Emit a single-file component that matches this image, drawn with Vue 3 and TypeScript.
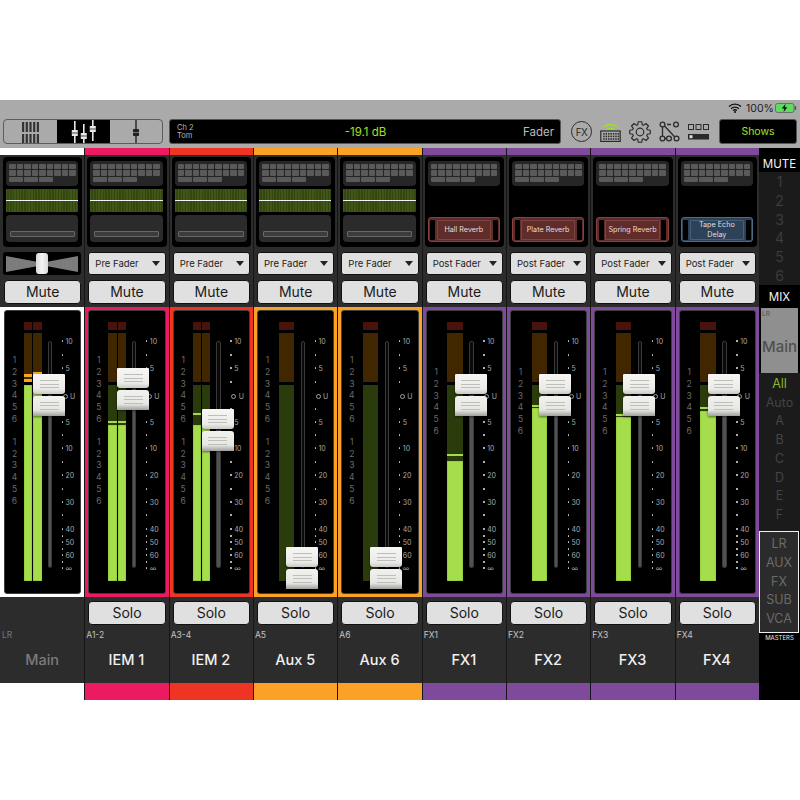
<script setup lang="ts">
type Channel = {
  tag: string
  name: string
  color: string
  fader: number
  send?: string
  fx?: string
  fxTone?: 'red' | 'blue'
  mono?: boolean
  fill: number[]
  peak: number[]
}

// fader / fill / peak values are px from the top of the meter panel
const channels: Channel[] = [
  { tag: 'LR', name: 'Main', color: '#ffffff', fader: 63, fill: [74, 74], peak: [63, 61] },
  { tag: 'A1-2', name: 'IEM 1', color: '#ec1a60', fader: 57, send: 'Pre Fader', fill: [114, 114], peak: [110, 110] },
  { tag: 'A3-4', name: 'IEM 2', color: '#ee3524', fader: 98, send: 'Pre Fader', fill: [114, 114], peak: [102, 102] },
  { tag: 'A5', name: 'Aux 5', color: '#faa228', fader: 236, send: 'Pre Fader', mono: true, fill: [270], peak: [] },
  { tag: 'A6', name: 'Aux 6', color: '#faa228', fader: 236, send: 'Pre Fader', mono: true, fill: [270], peak: [] },
  { tag: 'FX1', name: 'FX1', color: '#804a9c', fader: 63, send: 'Post Fader', fx: 'Hall Reverb', fxTone: 'red', mono: true, fill: [150], peak: [143] },
  { tag: 'FX2', name: 'FX2', color: '#804a9c', fader: 63, send: 'Post Fader', fx: 'Plate Reverb', fxTone: 'red', mono: true, fill: [97], peak: [94] },
  { tag: 'FX3', name: 'FX3', color: '#804a9c', fader: 63, send: 'Post Fader', fx: 'Spring Reverb', fxTone: 'red', mono: true, fill: [106], peak: [103] },
  { tag: 'FX4', name: 'FX4', color: '#804a9c', fader: 63, send: 'Post Fader', fx: 'Tape Echo Delay', fxTone: 'blue', mono: true, fill: [100], peak: [96] },
]

const scale = [
  { y: 30, label: '10' }, { y: 44 }, { y: 57, label: '5' }, { y: 71 },
  { y: 85, label: 'U' }, { y: 98 }, { y: 111, label: '5' }, { y: 124 },
  { y: 137, label: '10' }, { y: 151 }, { y: 164, label: '20' }, { y: 178 },
  { y: 191, label: '30' }, { y: 204 }, { y: 218, label: '40' }, { y: 225 },
  { y: 231, label: '50' }, { y: 238 }, { y: 244, label: '60' }, { y: 251 },
  { y: 257, label: '∞' },
]

const muteGroups = ['1', '2', '3', '4', '5', '6']
const mixGroups = ['Auto', 'A', 'B', 'C', 'D', 'E', 'F']
const masters = ['LR', 'AUX', 'FX', 'SUB', 'VCA']

// meter panel top sits at y=311, green zone starts 74px below it
const greenTop = 74
const greenHeight = 196

const gearPath = (() => {
  const teeth = 8
  let d = ''
  for (let i = 0; i < teeth; i++) {
    const a = (i * Math.PI * 2) / teeth
    const pts = [
      [7.6, a - 0.3],
      [10.4, a - 0.17],
      [10.4, a + 0.17],
      [7.6, a + 0.3],
    ]
    for (const [r, t] of pts) {
      d += `${d ? 'L' : 'M'}${(11 + r * Math.sin(t)).toFixed(2)} ${(11 - r * Math.cos(t)).toFixed(2)}`
    }
  }
  return d + 'Z'
})()
</script>

<template>
  <div class="page">
    <header class="header">
      <div class="status">
        <svg class="wifi" width="14" height="10" viewBox="0 0 14 10">
          <path d="M1 3.6a8.6 8.6 0 0 1 12 0M3.1 5.7a5.6 5.6 0 0 1 7.8 0M5.1 7.6a2.8 2.8 0 0 1 3.8 0" fill="none" stroke="#111" stroke-width="1.4" />
          <circle cx="7" cy="9" r="1" fill="#111" />
        </svg>
        <span class="battery-text">100%</span>
        <svg width="22" height="10" viewBox="0 0 22 10">
          <rect x="0.5" y="0.5" width="18.5" height="9" rx="2" fill="#5fdc5f" stroke="#555" stroke-width="0.7" />
          <rect x="19.6" y="3" width="1.6" height="4" rx="0.7" fill="#555" />
          <path d="M10.6 0.8 6.8 5.6h2.5l-.8 3.6 3.9-4.9H9.9z" fill="#111" />
        </svg>
      </div>
      <div class="toolbar">
        <div class="tabs">
          <div class="tab">
            <svg width="18" height="24" viewBox="0 0 18 24">
              <g fill="#333">
                <template v-for="i in 5" :key="i">
                  <rect :x="(i - 1) * 3.7" y="1" width="2.2" height="10" />
                  <rect :x="(i - 1) * 3.7" y="13" width="2.2" height="10" />
                </template>
              </g>
            </svg>
          </div>
          <div class="tab active">
            <svg width="26" height="25" viewBox="0 0 26 25">
              <g fill="#e8e8e8">
                <rect x="3" y="1" width="1.6" height="22" />
                <rect x="12" y="4" width="1.6" height="21" />
                <rect x="21" y="0" width="1.6" height="21" />
                <rect x="0.8" y="10" width="6" height="6" rx="0.6" />
                <rect x="9.8" y="13" width="6" height="6" rx="0.6" />
                <rect x="18.8" y="6" width="6" height="6" rx="0.6" />
              </g>
              <g fill="#222">
                <rect x="0.8" y="12.6" width="6" height="0.8" />
                <rect x="9.8" y="15.6" width="6" height="0.8" />
                <rect x="18.8" y="8.6" width="6" height="0.8" />
              </g>
            </svg>
          </div>
          <div class="tab">
            <svg width="8" height="25" viewBox="0 0 8 25">
              <rect x="3.2" y="0" width="1.6" height="25" fill="#333" />
              <rect x="1" y="9" width="6" height="7" rx="0.8" fill="#222" />
              <rect x="1" y="12.2" width="6" height="0.7" fill="#999" />
            </svg>
          </div>
        </div>
        <div class="display">
          <div class="display-ch">
            <span>Ch 2</span>
            <span>Tom</span>
          </div>
          <div class="display-db">-19.1 dB</div>
          <div class="display-mode">Fader</div>
        </div>
        <div class="tools">
          <div class="fx-icon">FX</div>
          <svg width="21" height="22" viewBox="0 0 21 22">
            <path d="M4 6.2a9 9 0 0 1 13 0M6.8 8.6a5.4 5.4 0 0 1 7.4 0" fill="none" stroke="#9fe01f" stroke-width="1.5" />
            <rect x="0.8" y="10" width="19.4" height="10.4" fill="none" stroke="#2b2b2b" stroke-width="1.2" />
            <g fill="#2b2b2b">
              <template v-for="i in 7" :key="i">
                <rect :x="0.8 + i * 2.4" y="12" width="1.5" height="1.6" />
                <rect :x="0.8 + i * 2.4" y="14.6" width="1.5" height="1.6" />
                <rect :x="0.8 + i * 2.4" y="17.2" width="1.5" height="1.6" />
              </template>
            </g>
          </svg>
          <svg width="22" height="22" viewBox="0 0 22 22">
            <path :d="gearPath" fill="none" stroke="#2b2b2b" stroke-width="1.2" stroke-linejoin="round" />
            <circle cx="11" cy="11" r="3.8" fill="none" stroke="#2b2b2b" stroke-width="1.2" />
          </svg>
          <svg width="21" height="21" viewBox="0 0 21 21">
            <g fill="none" stroke="#2b2b2b" stroke-width="1.3">
              <path d="M3.5 6v9M8 3.5h4M5.5 5 15.6 15.7M6 17.5h1.6" />
              <circle cx="3.5" cy="3.5" r="2.4" />
              <circle cx="17" cy="3.5" r="2.4" />
              <circle cx="3.5" cy="17.5" r="2.4" />
              <circle cx="10" cy="17.5" r="2.4" />
              <circle cx="17.5" cy="17.5" r="2.4" />
            </g>
          </svg>
          <svg width="21" height="16" viewBox="0 0 21 16">
            <g fill="none" stroke="#2b2b2b" stroke-width="1">
              <rect x="0.5" y="0.5" width="5" height="5" />
              <rect x="8" y="0.5" width="5" height="5" />
              <rect x="15.5" y="0.5" width="5" height="5" />
            </g>
            <rect x="0" y="10" width="21" height="5.5" fill="#2b2b2b" />
            <rect x="1.5" y="11.2" width="3" height="3" fill="#ddd" />
          </svg>
        </div>
        <div class="shows">Shows</div>
      </div>
    </header>

    <main class="console">
      <div class="strips">
        <section v-for="(ch, idx) in channels" :key="ch.tag" class="strip" :class="{ master: idx === 0 }">
          <div class="color-top" :style="{ background: ch.color }"></div>
          <div class="processing">
            <div class="keys">
              <i v-for="k in 18" :key="k"></i>
              <i v-for="k in 3" :key="'w' + k" class="wide"></i>
            </div>
            <template v-if="!ch.fx">
              <div class="eq"><span></span></div>
              <div class="gate"><span></span></div>
            </template>
            <div v-else class="fx-slot" :class="ch.fxTone">
              <i></i>
              <div class="fx-name">{{ ch.fx }}</div>
              <i></i>
            </div>
          </div>

          <div v-if="ch.send" class="send">
            <span>{{ ch.send }}</span>
            <em></em>
          </div>
          <div v-else class="pan">
            <svg width="72" height="16" viewBox="0 0 72 16">
              <path d="M0 0 36 6.8 72 0V16L36 9.2 0 16Z" fill="#7c7c7c" />
            </svg>
            <div class="pan-knob"></div>
          </div>
          <button class="mute">Mute</button>

          <div class="meter-wrap" :style="{ background: ch.color }">
            <div class="meter">
              <div class="groups" :class="{ single: ch.fx }">
                <div class="group">
                  <span v-for="g in muteGroups" :key="g">{{ g }}</span>
                </div>
                <div v-if="!ch.fx" class="group">
                  <span v-for="g in muteGroups" :key="g">{{ g }}</span>
                </div>
              </div>
              <div class="bars" :class="{ mono: ch.mono }">
                <div v-for="(f, b) in ch.fill" :key="b" class="bar">
                  <div class="clip"></div>
                  <div class="hot">
                    <i
                      v-if="ch.peak[b] !== undefined && ch.peak[b] < greenTop"
                      class="peak orange"
                      :style="{ top: ch.peak[b] - 22 + 'px' }"
                    ></i>
                    <i
                      v-if="ch.peak[b] !== undefined && ch.peak[b] < greenTop"
                      class="peak orange"
                      :style="{ top: ch.peak[b] - 17 + 'px' }"
                    ></i>
                  </div>
                  <div class="safe">
                    <i class="fill" :style="{ height: greenTop + greenHeight - f + 'px' }"></i>
                    <i
                      v-if="ch.peak[b] !== undefined && ch.peak[b] >= greenTop"
                      class="peak"
                      :style="{ top: ch.peak[b] - greenTop + 'px' }"
                    ></i>
                  </div>
                </div>
              </div>
              <div class="track">
                <i :style="{ top: ch.fader + 20 - 30 + 'px' }"></i>
              </div>
              <div class="scale">
                <div v-for="(s, i) in scale" :key="i" class="tick" :style="{ top: s.y + 'px' }">
                  <template v-if="s.label === 'U'">
                    <b class="ring"></b><span>U</span>
                  </template>
                  <template v-else>
                    <b></b><span v-if="s.label">{{ s.label }}</span>
                  </template>
                </div>
              </div>
              <div class="handle" :style="{ top: ch.fader + 'px' }">
                <div class="cap"><s></s><s></s><s></s></div>
                <div class="cap lower"><s></s><s></s><s></s></div>
              </div>
            </div>
          </div>

          <div class="footer">
            <button v-if="idx > 0" class="solo">Solo</button>
            <div v-else class="solo-gap"></div>
            <div class="tag">{{ ch.tag }}</div>
            <div class="name">{{ ch.name }}</div>
          </div>
          <div class="color-bottom" :style="{ background: ch.color }"></div>
        </section>
      </div>

      <aside class="side">
        <div class="side-title first">MUTE</div>
        <div class="mute-groups">
          <span v-for="g in muteGroups" :key="g">{{ g }}</span>
        </div>
        <div class="side-title">MIX</div>
        <div class="mix-main">
          <small>LR</small>
          <span>Main</span>
        </div>
        <div class="mix-list">
          <span class="all">All</span>
          <span v-for="g in mixGroups" :key="g">{{ g }}</span>
        </div>
        <div class="masters">
          <span v-for="m in masters" :key="m">{{ m }}</span>
        </div>
        <div class="masters-label">MASTERS</div>
      </aside>
    </main>
  </div>
</template>

<style scoped>
.page {
  width: 800px;
  height: 800px;
  padding-top: 100px;
  box-sizing: border-box;
  font-family: Inter, 'Liberation Sans', sans-serif;
  overflow: hidden;
}

.header {
  height: 48px;
  background: #aaaaaa;
  display: flex;
  flex-direction: column;
  box-sizing: border-box;
  padding: 3px 3px 0;
}
.status {
  height: 16px;
  display: flex;
  align-items: flex-start;
  justify-content: flex-end;
  gap: 3px;
  font-size: 10.5px;
  line-height: 11px;
  color: #222;
}
.wifi {
  margin-right: 1px;
}
.battery-text {
  width: 26px;
}
.toolbar {
  height: 25px;
  display: flex;
  align-items: stretch;
}
.tabs {
  width: 160px;
  display: grid;
  grid-template-columns: 53px 53px 1fr;
  border: 1px solid #5c5c5c;
  border-radius: 4px;
  box-sizing: border-box;
  overflow: hidden;
}
.tab {
  display: flex;
  align-items: center;
  justify-content: center;
}
.tab.active {
  background: #000;
}
.display {
  margin-left: 6px;
  width: 392px;
  background: #000;
  border: 1px solid #555;
  border-radius: 3px;
  box-sizing: border-box;
  display: grid;
  grid-template-columns: 1fr 1fr 1fr;
  align-items: center;
  padding: 0 6px 0 7px;
}
.display-ch {
  display: flex;
  flex-direction: column;
  font-size: 7.5px;
  line-height: 8px;
  color: #b5b5b5;
}
.display-db {
  text-align: center;
  color: #a4e020;
  font-size: 11.5px;
}
.display-mode {
  text-align: right;
  color: #bbb;
  font-size: 11.5px;
}
.tools {
  width: 158px;
  display: flex;
  align-items: center;
  gap: 8px;
  padding-left: 10px;
  box-sizing: border-box;
}
.fx-icon {
  width: 21px;
  height: 21px;
  flex: none;
  box-sizing: border-box;
  border: 1.2px solid #2b2b2b;
  border-radius: 50%;
  display: flex;
  align-items: center;
  justify-content: center;
  font-size: 10px;
  letter-spacing: -0.5px;
  color: #2b2b2b;
}
.shows {
  width: 78px;
  background: #000;
  border: 1px solid #555;
  border-radius: 3px;
  box-sizing: border-box;
  color: #a4e020;
  font-size: 10.5px;
  display: flex;
  align-items: center;
  justify-content: center;
}

.console {
  height: 552px;
  display: flex;
}
.strips {
  width: 759px;
  display: grid;
  grid-template-columns: repeat(9, 1fr);
}
.strip {
  display: flex;
  flex-direction: column;
  background: #2c2c2c;
  min-width: 0;
  position: relative;
}
.strip::before {
  content: '';
  position: absolute;
  left: 0;
  top: 0;
  bottom: 0;
  width: 1px;
  background: #161616;
  z-index: 1;
}
.strip.master::before {
  display: none;
}
.color-top {
  height: 7px;
  margin-bottom: 2px;
}
.processing {
  height: 90px;
  margin: 0 2px 0 3px;
  background: #000;
  border-radius: 4px;
  box-sizing: border-box;
  padding: 4px 4px 5px 3px;
  display: flex;
  flex-direction: column;
  gap: 3px;
}
.keys {
  height: 25px;
  flex: none;
  background: #262626;
  border-radius: 4px;
  box-sizing: border-box;
  padding: 2.5px 3px;
  display: grid;
  grid-template-columns: repeat(9, 6.5px);
  grid-auto-rows: 5.5px;
  gap: 1px;
}
.keys i {
  background: #5a5a5a;
  border-radius: 1px;
}
.keys i.wide {
  grid-column: span 2;
}
.eq {
  height: 25px;
  position: relative;
  background: repeating-linear-gradient(90deg, #405718 0, #405718 1.4px, #33470f 1.4px, #33470f 2.8px);
  display: flex;
  align-items: center;
}
.eq span {
  flex: 1;
  height: 1px;
  background: #f2f2f2;
}
.gate {
  height: 25px;
  background: #2b2b2b;
  border-radius: 4px;
  display: flex;
  align-items: flex-end;
  padding: 0 3.5px 5px;
}
.gate span {
  flex: 1;
  height: 6px;
  box-sizing: border-box;
  border: 1px solid #666;
  border-radius: 1px;
  background: #3c3c3c;
}
.fx-slot {
  margin-top: auto;
  height: 25px;
  box-sizing: border-box;
  border: 1px solid;
  border-radius: 3px;
  display: flex;
  align-items: stretch;
  gap: 1.5px;
  padding: 1.5px;
}
.fx-slot i {
  width: 5px;
  background: #000;
  border-radius: 1px;
  flex: none;
}
.fx-name {
  flex: 1;
  border: 1px solid;
  border-radius: 1px;
  color: #e8dcdc;
  font-size: 7.2px;
  line-height: 10px;
  text-align: center;
  display: flex;
  align-items: center;
  justify-content: center;
  white-space: normal;
}
.fx-slot.red {
  border-color: #8a403c;
  background: #5f2c2a;
}
.fx-slot.red .fx-name {
  border-color: #7e4441;
}
.fx-slot.blue {
  border-color: #4a6b8a;
  background: #2c4259;
}
.fx-slot.blue .fx-name {
  border-color: #46607a;
}
.send {
  height: 23px;
  margin: 5px 3px 0 4px;
  background: #e0e0e0;
  border-radius: 3px;
  border: 1px solid #111;
  box-sizing: border-box;
  display: flex;
  align-items: center;
  justify-content: space-between;
  padding: 0 5px 0 6px;
  font-size: 9.5px;
  color: #222;
  flex: none;
}
.send em {
  width: 0;
  height: 0;
  border-left: 4px solid transparent;
  border-right: 4px solid transparent;
  border-top: 5px solid #222;
}
.pan {
  height: 23px;
  margin: 5px 3px 0 3px;
  background: #000;
  border-radius: 3px;
  position: relative;
  display: flex;
  align-items: center;
  justify-content: center;
  flex: none;
}
.pan-knob {
  position: absolute;
  left: 33px;
  top: 1px;
  width: 12px;
  height: 21px;
  border-radius: 3px;
  background: linear-gradient(90deg, #d8d8d8, #f4f4f4 50%, #d8d8d8);
}
.mute {
  height: 24px;
  margin: 5px 3px 0 4px;
  flex: none;
  padding: 0 0 2px;
  background: #e0e0e0;
  border: 1px solid #111;
  border-radius: 4px;
  font-family: inherit;
  font-size: 14px;
  color: #1a1a1a;
}
.meter-wrap {
  height: 290px;
  margin-top: 3px;
  padding: 3px 3px 3px 4px;
  box-sizing: border-box;
  flex: none;
}
.meter {
  height: 284px;
  position: relative;
  background: #000;
  border: 1px solid #3e3e3e;
  border-radius: 3px;
  box-sizing: border-box;
  display: flex;
  align-items: flex-start;
}
.groups {
  width: 19px;
  flex: none;
  padding-top: 44px;
  display: flex;
  flex-direction: column;
  gap: 11px;
}
.groups.single {
  padding-top: 56px;
}
.group {
  display: flex;
  flex-direction: column;
  align-items: center;
  font-size: 8.5px;
  line-height: 11.8px;
  color: #6a6a6a;
}
.bars {
  width: 17.5px;
  flex: none;
  margin-top: 11px;
  display: flex;
  gap: 1px;
}
.bars.mono {
  padding: 0 0.5px 0 1.5px;
  box-sizing: border-box;
}
.bar {
  flex: 1;
  display: flex;
  flex-direction: column;
}
.clip {
  height: 8px;
  background: #47130b;
  margin-bottom: 3px;
}
.hot {
  height: 49px;
  background: #412700;
  margin-bottom: 3px;
  position: relative;
}
.safe {
  height: 196px;
  background: #2a3c0c;
  position: relative;
}
.fill {
  position: absolute;
  left: 0;
  right: 0;
  bottom: 0;
  background: #a6dd4c;
  box-shadow: inset 0 0 0 0.5px #86c531;
  border-radius: 0 0 1px 1px;
}
.peak {
  position: absolute;
  left: 0;
  right: 0;
  height: 2px;
  background: #a6dd4c;
}
.peak.orange {
  height: 3px;
  background: #f7a81b;
}
.track {
  width: 4.5px;
  height: 227px;
  flex: none;
  margin: 30px 0 0 6px;
  position: relative;
  box-sizing: border-box;
  border: 1px solid #3a3a3a;
  border-radius: 2px;
  background: #0a0a0a;
  overflow: hidden;
}
.track i {
  position: absolute;
  left: -1px;
  right: -1px;
  bottom: -1px;
  background: #525252;
}
.scale {
  flex: 1;
  position: relative;
  height: 100%;
}
.tick {
  position: absolute;
  left: 9.5px;
  height: 0;
  display: flex;
  align-items: center;
  gap: 2.5px;
  font-size: 7px;
  color: #a8a8a8;
  white-space: nowrap;
}
.tick b {
  width: 1.5px;
  height: 1.5px;
  background: #cfcfcf;
  border-radius: 50%;
  flex: none;
}
.tick b.ring {
  width: 5px;
  height: 5px;
  margin-left: 1px;
  background: transparent;
  border: 0.8px solid #a0a0a0;
  box-sizing: border-box;
}
.handle {
  position: absolute;
  left: 28px;
  width: 32px;
  display: flex;
  flex-direction: column;
  gap: 1.5px;
  filter: drop-shadow(0 1px 1px rgba(0, 0, 0, 0.5));
}
.cap {
  height: 20px;
  box-sizing: border-box;
  border-radius: 1px 1px 3px 3px;
  background: linear-gradient(#f6f6f4, #ecebe8 75%, #c9c9c6);
  display: flex;
  flex-direction: column;
  justify-content: center;
  align-items: center;
  gap: 2.5px;
}
.cap.lower {
  border-radius: 3px 3px 0 0;
  background: linear-gradient(#f1f1ef, #e6e6e2 70%, #9f9f9b);
}
.cap s {
  width: 19px;
  height: 1px;
  background: #bdbfbb;
}
.footer {
  height: 86px;
  flex: none;
  display: flex;
  flex-direction: column;
}
.solo {
  height: 24px;
  margin: 4px 3px 0 4px;
  flex: none;
  padding: 0 0 2px;
  background: #e0e0e0;
  border: 1px solid #111;
  border-radius: 4px;
  font-family: inherit;
  font-size: 14px;
  color: #1a1a1a;
}
.solo-gap {
  height: 28px;
  flex: none;
}
.tag {
  margin-top: 5px;
  padding-left: 2px;
  font-size: 8.5px;
  line-height: 10px;
  color: #c4c4c4;
}
.name {
  margin-top: 11px;
  text-align: center;
  font-size: 14.5px;
  font-weight: 500;
  line-height: 18px;
  color: #f0f0f0;
}
.master .tag {
  color: #777;
}
.master .name {
  color: #7b7b7b;
}
.color-bottom {
  height: 17px;
  flex: none;
}

.side {
  width: 41px;
  background: #000;
  display: flex;
  flex-direction: column;
  align-items: stretch;
  text-align: center;
}
.side-title {
  height: 23px;
  flex: none;
  color: #f2f2f2;
  font-size: 11.5px;
  padding-top: 1px;
  box-sizing: border-box;
  display: flex;
  align-items: center;
  justify-content: center;
}
.side-title.first {
  height: 24px;
  padding-top: 7px;
}
.mute-groups {
  height: 113px;
  flex: none;
  background: #1b1b1b;
  display: flex;
  flex-direction: column;
  justify-content: space-around;
  color: #3c3c3c;
  font-size: 14px;
}
.mix-main {
  height: 65px;
  flex: none;
  margin: 0 2px;
  background: #8f8f8f;
  color: #505050;
  font-size: 15px;
  font-weight: 500;
  display: flex;
  align-items: center;
  justify-content: center;
  padding-top: 11px;
  box-sizing: border-box;
  position: relative;
}
.mix-main small {
  position: absolute;
  left: 1px;
  top: 2px;
  font-size: 6.5px;
  font-weight: 400;
}
.mix-list {
  height: 158px;
  flex: none;
  background: #1b1b1b;
  display: flex;
  flex-direction: column;
  align-items: center;
  padding-top: 2px;
  box-sizing: border-box;
  color: #444;
  font-size: 12.5px;
  line-height: 18.7px;
}
.mix-list .all {
  color: #84b82a;
}
.masters {
  height: 102px;
  flex: none;
  margin: 0 1px 0 0;
  box-sizing: border-box;
  border: 1px solid #f0f0f0;
  background: #2b2b2b;
  display: flex;
  flex-direction: column;
  justify-content: center;
  color: #6a6a6a;
  font-size: 12.5px;
  line-height: 18.7px;
}
.masters-label {
  color: #e8e8e8;
  font-size: 6px;
  line-height: 9px;
}
</style>

<style>
html,
body {
  margin: 0;
  background: #fff;
}
</style>
